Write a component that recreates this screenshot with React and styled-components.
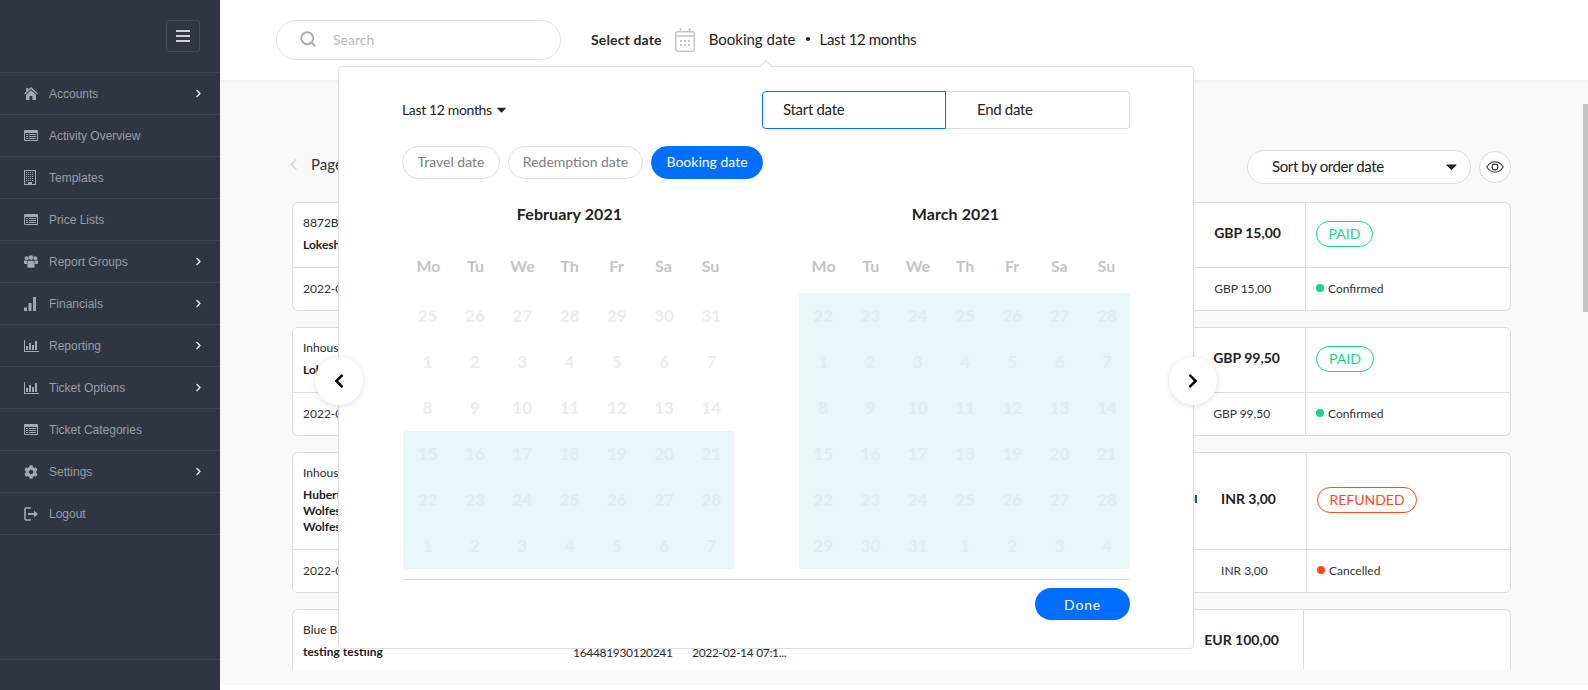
import React from 'react';
import styled, { createGlobalStyle } from 'styled-components';
import { FaCog, FaChevronRight, FaChevronLeft, FaCaretDown } from 'react-icons/fa';
import { FiSearch } from 'react-icons/fi';

const Global = createGlobalStyle`
  html, body { margin: 0; height: 100%; background: #fff; overflow: hidden; }
  * { box-sizing: border-box; }
  body { font-family: Lato, "Open Sans", sans-serif; color: #222; }
`;

const Page = styled.div`
  display: flex;
  width: 1588px;
  height: 690px;
  overflow: hidden;
`;

const Sidebar = styled.nav`
  flex: 0 0 220px;
  background: #2f3541;
  display: flex;
  flex-direction: column;
  font-family: "Liberation Sans", Arial, sans-serif;
`;
const SideTop = styled.div`
  height: 73px;
  padding: 20px 20px 0 0;
  display: flex;
  justify-content: flex-end;
  border-bottom: 1px solid #3e4450;
`;
const MenuButton = styled.div`
  width: 34px;
  height: 32px;
  border: 1px solid #464c58;
  border-radius: 3px;
  display: flex;
  flex-direction: column;
  justify-content: center;
  align-items: center;
  gap: 3px;
  i { display: block; width: 14px; height: 2px; background: #cfd1d4; }
`;
const NavRow = styled.div`
  height: 42px;
  border-bottom: 1px solid #3e4450;
  display: flex;
  align-items: center;
  padding: 0 17px 0 24px;
  color: #9a9ea6;
  font-size: 12px;
`;
const NavIcon = styled.span`
  width: 25px;
  display: flex;
  align-items: center;
  svg { display: block; color: #a5a8af; }
`;
const NavLabel = styled.span` flex: 1; `;
const NavArrow = styled(FaChevronRight)`
  color: #e6e7e9;
  width: 9px;
  height: 9px;
`;
const SideFoot = styled.div`
  margin-top: auto;
  height: 31px;
  border-top: 1px solid #3e4450;
`;

const Main = styled.div`
  position: relative;
  flex: 1;
  min-width: 0;
  display: flex;
  flex-direction: column;
`;
const Header = styled.header`
  position: relative;
  z-index: 1;
  height: 80px;
  background: #fff;
  box-shadow: 0 1px 4px rgba(0,0,0,.07);
  display: flex;
  align-items: center;
  padding-left: 56px;
`;
const SearchBox = styled.div`
  width: 285px;
  height: 40px;
  border: 1px solid #dedede;
  border-radius: 20px;
  display: flex;
  align-items: center;
  padding: 0 0 2px 22px;
  gap: 16px;
  color: #b9b9b9;
  font-size: 14px;
  svg { color: #a9a9a9; }
`;
const SelectLabel = styled.span`
  margin-left: 30px;
  padding-bottom: 2px;
  font-size: 14px;
  font-weight: 700;
  letter-spacing: .15px;
  color: #2b2b2b;
`;
const CalIcon = styled.svg`
  margin: 0 14px 0 13px;
`;
const DateSummary = styled.span`
  padding-bottom: 2px;
  font-size: 15px;
  color: #222;
  display: flex;
  align-items: center;
  gap: 10px;
`;
const SummaryDot = styled.i`
  width: 4px;
  height: 4px;
  border-radius: 50%;
  background: #222;
`;
const Tight = styled.span`
  letter-spacing: -.35px;
`;

const ScrollArea = styled.div`
  height: 605px;
  background: #f9f9f9;
`;
const Content = styled.div`
  height: 589px;
  overflow: hidden;
  padding: 70px 77px 0 72px;
`;
const Toolbar = styled.div`
  height: 34px;
  display: flex;
  align-items: center;
  margin-bottom: 18px;
`;
const Pager = styled.div`
  display: flex;
  align-items: center;
  padding-bottom: 6px;
`;
const PrevPage = styled(FaChevronLeft)`
  width: 9px;
  height: 13px;
  color: #dcdcdc;
  margin-left: -3px;
`;
const PageLabel = styled.span`
  margin-left: 13px;
  font-size: 15px;
  color: #333;
`;
const SortSelect = styled.div`
  margin-left: auto;
  width: 224px;
  height: 34px;
  background: #fff;
  border: 1px solid #dddddd;
  border-radius: 17px;
  display: flex;
  align-items: center;
  justify-content: space-between;
  padding: 0 10px 2px 24px;
  font-size: 15px;
  letter-spacing: -.38px;
  color: #222;
`;
const EyeButton = styled.div`
  margin-left: 8px;
  width: 32px;
  height: 32px;
  border-radius: 50%;
  border: 1px solid #dddddd;
  background: #fff;
  display: flex;
  align-items: center;
  justify-content: center;
  color: #333;
`;

const Card = styled.article`
  display: grid;
  grid-template-columns: 1fr max-content ${p => p.$statusWidth}px;
  background: #fff;
  border: 1px solid #dddddd;
  border-radius: 6px;
  margin-bottom: 16px;
`;
const Cell = styled.div`
  border-left: ${p => (p.$divided ? '1px solid #dddddd' : '0')};
  border-top: ${p => (p.$lower ? '1px solid #dddddd' : '0')};
`;
const MainCell = styled(Cell)`
  display: flex;
  padding: 9px 0 14px 10px;
  font-size: 12px;
  color: #2a2a2a;
`;
const NameColumn = styled.div` width: 270px; `;
const RefLine = styled.div`
  line-height: 22px;
  margin-bottom: 3px;
`;
const NameLine = styled.div`
  line-height: 16px;
  font-weight: 700;
  color: #1d1d1d;
`;
const PlainColumn = styled.div`
  width: ${p => p.$w}px;
  padding-top: 26px;
  line-height: 16px;
  white-space: nowrap;
  letter-spacing: -.32px;
`;
const PeekMark = styled.svg`
  margin: auto 0 auto auto;
`;
const AmountCell = styled(Cell)`
  display: flex;
  align-items: ${p => (p.$top ? 'flex-start' : 'center')};
  padding: ${p => (p.$top ? '21px' : '0')} ${p => p.$right}px ${p => (p.$top ? '0' : '6px')} ${p => p.$left}px;
  font-size: 14px;
  font-weight: 700;
  color: #222;
`;
const StatusCell = styled(Cell)`
  display: flex;
  align-items: center;
  padding: 0 0 3px 10px;
`;
const StatusPill = styled.span`
  height: 26px;
  width: ${p => p.$w}px;
  border: 1px solid ${p => p.$color};
  color: ${p => p.$color};
  border-radius: 13px;
  font-size: 14px;
  display: flex;
  align-items: center;
  justify-content: center;
`;
const LowerCell = styled(Cell)`
  height: 43px;
  padding-bottom: 2px;
  display: flex;
  align-items: center;
  font-size: 12px;
  color: #333;
`;
const LowerDate = styled(LowerCell)` padding-left: 10px; `;
const LowerAmount = styled(LowerCell)`
  padding-right: ${p => p.$right}px;
  padding-left: ${p => p.$left}px;
`;
const LowerStatus = styled(LowerCell)`
  padding-left: 10px;
  gap: 4px;
`;
const Dot = styled.i`
  width: 8px;
  height: 8px;
  border-radius: 50%;
  background: ${p => p.$color};
`;

const Scrollbar = styled.div`
  position: absolute;
  right: 0;
  top: 104px;
  width: 5px;
  height: 208px;
  background: #c4c4c4;
`;

const Popover = styled.section`
  position: absolute;
  z-index: 3;
  left: 118px;
  top: 66px;
  width: 856px;
  height: 583px;
  background: #fff;
  border: 1px solid #dddddd;
  border-radius: 4px;
  padding: 24px 63px 0;
  &::before {
    content: '';
    position: absolute;
    left: 422px;
    top: -5px;
    width: 9px;
    height: 9px;
    background: #fff;
    border-left: 1px solid #dddddd;
    border-top: 1px solid #dddddd;
    transform: rotate(45deg);
  }
`;
const PopTop = styled.div`
  display: flex;
  align-items: center;
  justify-content: space-between;
`;
const RangeSelect = styled.div`
  display: flex;
  align-items: center;
  gap: 2px;
  padding-bottom: 2px;
  font-size: 14px;
  letter-spacing: -.35px;
  color: #222;
`;
const DateFields = styled.div`
  display: flex;
  width: 368px;
  height: 38px;
`;
const DateField = styled.div`
  width: ${p => p.$w}px;
  border: 1px solid ${p => (p.$active ? '#006fff' : '#dddddd')};
  border-left-width: ${p => (p.$active ? '1px' : '0')};
  border-radius: ${p => (p.$active ? '4px 0 0 4px' : '0 4px 4px 0')};
  padding-left: ${p => (p.$active ? '20px' : '31px')};
  font-size: 15px;
  letter-spacing: -.3px;
  line-height: 34px;
  color: #222;
`;
const Pills = styled.div`
  display: flex;
  gap: 8px;
  margin-top: 17px;
`;
const Pill = styled.div`
  height: 33px;
  width: ${p => p.$w}px;
  padding-bottom: 2px;
  border-radius: 17px;
  border: 1px solid ${p => (p.$active ? '#006fff' : '#dddddd')};
  background: ${p => (p.$active ? '#006fff' : '#fff')};
  color: ${p => (p.$active ? '#fff' : '#808080')};
  font-size: 14px;
  display: flex;
  align-items: center;
  justify-content: center;
`;
const Months = styled.div`
  display: flex;
  justify-content: space-between;
  padding-left: 1px;
  margin-top: 23px;
`;
const Month = styled.div` width: 331px; `;
const MonthTitle = styled.div`
  height: 24px;
  line-height: 24px;
  padding-left: ${p => p.$pad}px;
  padding-right: ${p => p.$padRight}px;
  text-align: center;
  font-size: 16px;
  font-weight: 700;
  letter-spacing: .1px;
  color: #222;
`;
const Week = styled.div`
  display: grid;
  grid-template-columns: repeat(7, 1fr);
  margin: 28px 0 13px;
  padding-left: ${p => p.$shift}px;
  height: 26px;
  line-height: 24px;
  text-align: center;
  font-size: 16px;
  font-weight: 700;
  color: #c5c5c5;
`;
const Days = styled.div`
  display: grid;
  grid-template-columns: repeat(7, 1fr);
  grid-auto-rows: 46px;
`;
const Day = styled.div`
  display: flex;
  align-items: center;
  justify-content: center;
  padding: 0 0 2px ${p => p.$shift}px;
  font-size: 17px;
  font-weight: 700;
  color: ${p => (p.$marked ? '#dfeeee' : '#ececec')};
  background: ${p => (p.$marked ? '#e8f7f7' : 'transparent')};
`;
const PopFoot = styled.div`
  margin-top: 10px;
  border-top: 1px solid #dddddd;
  padding-top: 8px;
  display: flex;
  justify-content: flex-end;
`;
const DoneButton = styled.div`
  width: 95px;
  height: 32px;
  border-radius: 16px;
  background: #006fff;
  color: #fff;
  font-size: 14px;
  letter-spacing: .8px;
  display: flex;
  align-items: center;
  justify-content: center;
`;
const RoundNav = styled.div`
  position: absolute;
  top: 290px;
  ${p => p.$side}: -24px;
  width: 48px;
  height: 48px;
  border-radius: 50%;
  background: #fff;
  box-shadow: 0 1px 6px rgba(0,0,0,.12);
  display: flex;
  align-items: center;
  justify-content: center;
  color: #000;
`;

const HomeIcon = () => (
  <svg width="14" height="13" viewBox="0 0 14 13" fill="currentColor">
    <path d="M7 0 14 6.6l-.9 1L7 2 .9 7.6 0 6.6 2.2 4.5V1h2v1.7z" />
    <path d="M7 3.2 12 7.8V13H8.4V9H5.6v4H2V7.8z" />
  </svg>
);
const ListIcon = () => (
  <svg width="14" height="11" viewBox="0 0 14 11" fill="currentColor">
    <path fillRule="evenodd" d="M0 1a1 1 0 0 1 1-1h12a1 1 0 0 1 1 1v9a1 1 0 0 1-1 1H1a1 1 0 0 1-1-1zM1 3v7h12V3z" />
    <path d="M2 4h2v1H2zM5 4h7v1H5zM2 6h2v1H2zM5 6h7v1H5zM2 8h2v1H2zM5 8h7v1H5z" />
  </svg>
);
const BuildingIcon = () => (
  <svg width="12" height="15" viewBox="0 0 12 15" fill="currentColor">
    <path fillRule="evenodd" d="M0 0h12v15H0zM1 1v13h3v-2h4v2h3V1z" />
    <path d="M2 2h1v1H2zM4 2h1v1H4zM6 2h1v1H6zM8 2h1v1H8zM2 4h1v1H2zM4 4h1v1H4zM6 4h1v1H6zM8 4h1v1H8zM2 6h1v1H2zM4 6h1v1H4zM6 6h1v1H6zM8 6h1v1H8zM2 8h1v1H2zM4 8h1v1H4zM6 8h1v1H6zM8 8h1v1H8zM2 10h1v1H2zM4 10h1v1H4zM6 10h1v1H6zM8 10h1v1H8z" />
  </svg>
);
const UsersIcon = () => (
  <svg width="14" height="13" viewBox="0 0 14 13" fill="currentColor">
    <circle cx="2.6" cy="3.2" r="1.9" />
    <circle cx="11.4" cy="3.2" r="1.9" />
    <circle cx="7" cy="2.6" r="2.4" />
    <path d="M0 5.6h3.4a3 3 0 0 0-.4 1.6V9H1a1 1 0 0 1-1-1zM14 5.6h-3.4a3 3 0 0 1 .4 1.6V9h2a1 1 0 0 0 1-1z" />
    <path d="M4.6 5.8h4.8A1.4 1.4 0 0 1 10.6 7v4.6a1 1 0 0 1-1 1.2H4.4a1 1 0 0 1-1-1.2V7a1.4 1.4 0 0 1 1.2-1.2z" />
  </svg>
);
const SignalIcon = () => (
  <svg width="12" height="14" viewBox="0 0 12 14" fill="currentColor">
    <path d="M0 10.5h3V14H0zM4.5 6h3v8h-3zM9 0h3v14H9z" />
  </svg>
);
const BarsIcon = () => (
  <svg width="15" height="12" viewBox="0 0 15 12" fill="currentColor">
    <path d="M0 0h1v11h14v1H0zM2 6h2v4H2zM5 3h2v7H5zM8 5h2v5H8zM11 1h2v9h-2z" />
  </svg>
);
const LogoutIcon = () => (
  <svg width="15" height="14" viewBox="0 0 15 14" fill="none" stroke="currentColor" strokeWidth="1.6">
    <path d="M7 1H2a1 1 0 0 0-1 1v10a1 1 0 0 0 1 1h5" />
    <path d="M4 7h7" strokeWidth="2" />
    <path d="M10 3.6 14 7l-4 3.4z" fill="currentColor" stroke="none" />
  </svg>
);
const EyeIcon = () => (
  <svg width="18" height="12" viewBox="0 0 18 12" fill="none" stroke="currentColor" strokeWidth="1.1">
    <path d="M.8 6C3 2.6 6 .8 9 .8s6 1.8 8.2 5.2C15 9.4 12 11.2 9 11.2S3 9.4.8 6z" />
    <circle cx="9" cy="6" r="2.9" />
  </svg>
);

const NAV = [
  ['Accounts', <HomeIcon />, true],
  ['Activity Overview', <ListIcon />, false],
  ['Templates', <BuildingIcon />, false],
  ['Price Lists', <ListIcon />, false],
  ['Report Groups', <UsersIcon />, true],
  ['Financials', <SignalIcon />, true],
  ['Reporting', <BarsIcon />, true],
  ['Ticket Options', <BarsIcon />, true],
  ['Ticket Categories', <ListIcon />, false],
  ['Settings', <FaCog size={14} />, true],
  ['Logout', <LogoutIcon />, false],
];

const CARDS = [
  { ref: '8872B', names: ['Lokesh'], amount: 'GBP 15,00', date: '2022-02-14', status: 'PAID', state: 'Confirmed', sw: 205, l: 24, r: 24, pw: 57 },
  { ref: 'Inhouse', names: ['Lokesh'], amount: 'GBP 99,50', date: '2022-02-14', status: 'PAID', state: 'Confirmed', sw: 205, l: 24, r: 25, pw: 58 },
  { ref: 'Inhouse', names: ['Hubert', 'Wolfes', 'Wolfes'], amount: 'INR 3,00', date: '2022-02-14', status: 'REFUNDED', state: 'Cancelled', sw: 204, l: 24, r: 30, pw: 100, peek: true },
];
const GREEN = '#12d98a';
const RED = '#ff4a1c';

const Month1 = [25,26,27,28,29,30,31,1,2,3,4,5,6,7,8,9,10,11,12,13,14,15,16,17,18,19,20,21,22,23,24,25,26,27,28,1,2,3,4,5,6,7];
const Month2 = [22,23,24,25,26,27,28,1,2,3,4,5,6,7,8,9,10,11,12,13,14,15,16,17,18,19,20,21,22,23,24,25,26,27,28,29,30,31,1,2,3,4];
const WEEK = ['Mo','Tu','We','Th','Fr','Sa','Su'];

const Calendar = ({ title, days, from, shift, titlePad, titlePadRight }) => (
  <Month>
    <MonthTitle $pad={titlePad} $padRight={titlePadRight}>{title}</MonthTitle>
    <Week $shift={shift}>{WEEK.map(d => <span key={d}>{d}</span>)}</Week>
    <Days>{days.map((d, i) => <Day key={i} $marked={i >= from} $shift={shift}>{d}</Day>)}</Days>
  </Month>
);

export default function App() {
  return (
    <Page>
      <Global />
      <Sidebar>
        <SideTop><MenuButton><i /><i /><i /></MenuButton></SideTop>
        {NAV.map(([label, icon, arrow]) => (
          <NavRow key={label}>
            <NavIcon>{icon}</NavIcon>
            <NavLabel>{label}</NavLabel>
            {arrow && <NavArrow />}
          </NavRow>
        ))}
        <SideFoot />
      </Sidebar>
      <Main>
        <Header>
          <SearchBox><FiSearch size={18} strokeWidth={2.4} /><span>Search</span></SearchBox>
          <SelectLabel>Select date</SelectLabel>
          <CalIcon width="20" height="24" viewBox="0 0 20 24" fill="none" stroke="#c4c7cc" strokeWidth="1.5">
            <rect x=".75" y="3.75" width="18.5" height="19.5" rx="2" />
            <path d="M1 8h18M5.5 0v4M14.5 0v4" />
            <path d="M5 12h2v2H5zM9 12h2v2H9zM13 12h2v2h-2zM5 16h2v2H5zM9 16h2v2H9zM13 16h2v2h-2z" fill="#c4c7cc" stroke="none" />
          </CalIcon>
          <DateSummary><span>Booking date</span><SummaryDot /><Tight>Last 12 months</Tight></DateSummary>
        </Header>
        <ScrollArea>
          <Content>
            <Toolbar>
              <Pager>
                <PrevPage />
                <PageLabel>Page 1</PageLabel>
              </Pager>
              <SortSelect><span>Sort by order date</span><FaCaretDown size={17} /></SortSelect>
              <EyeButton><EyeIcon /></EyeButton>
            </Toolbar>
            {CARDS.map(c => (
              <Card key={c.amount} $statusWidth={c.sw}>
                <MainCell>
                  <NameColumn>
                    <RefLine>{c.ref}</RefLine>
                    {c.names.map((n, i) => <NameLine key={i}>{n}</NameLine>)}
                  </NameColumn>
                  {c.peek && (
                    <PeekMark width="3" height="8" viewBox="0 0 3 8">
                      <rect width="1" y="2" height="5" fill="#9fd3f5" />
                      <rect x="1" width="2" height="8" fill="#3b4a9c" />
                    </PeekMark>
                  )}
                </MainCell>
                <AmountCell $left={c.l} $right={c.r}>{c.amount}</AmountCell>
                <StatusCell $divided>
                  <StatusPill $w={c.pw} $color={c.status === 'PAID' ? GREEN : RED}>{c.status}</StatusPill>
                </StatusCell>
                <LowerDate $lower>{c.date}</LowerDate>
                <LowerAmount $lower $left={c.l} $right={c.r}>{c.amount}</LowerAmount>
                <LowerStatus $lower $divided>
                  <Dot $color={c.status === 'PAID' ? GREEN : RED} />{c.state}
                </LowerStatus>
              </Card>
            ))}
            <Card $statusWidth={207}>
              <MainCell>
                <NameColumn>
                  <RefLine>Blue Bay</RefLine>
                  <NameLine>testing testiing</NameLine>
                </NameColumn>
                <PlainColumn $w={119}>164481930120241</PlainColumn>
                <PlainColumn $w={100}>2022-02-14 07:1...</PlainColumn>
              </MainCell>
              <AmountCell $top $left={24} $right={24}>EUR 100,00</AmountCell>
              <StatusCell $divided />
            </Card>
          </Content>
        </ScrollArea>
        <Scrollbar />
        <Popover>
          <PopTop>
            <RangeSelect>Last 12 months <FaCaretDown size={15} /></RangeSelect>
            <DateFields>
              <DateField $active $w={184}>Start date</DateField>
              <DateField $w={184}>End date</DateField>
            </DateFields>
          </PopTop>
          <Pills>
            <Pill $w={98}>Travel date</Pill>
            <Pill $w={135}>Redemption date</Pill>
            <Pill $w={112} $active>Booking date</Pill>
          </Pills>
          <Months>
            <Calendar title="February 2021" days={Month1} from={21} shift={2} titlePad={2} titlePadRight={0} />
            <Calendar title="March 2021" days={Month2} from={0} shift={1} titlePad={0} titlePadRight={18} />
          </Months>
          <PopFoot><DoneButton>Done</DoneButton></PopFoot>
          <RoundNav $side="left"><FaChevronLeft size={16} /></RoundNav>
          <RoundNav $side="right"><FaChevronRight size={16} /></RoundNav>
        </Popover>
      </Main>
    </Page>
  );
}
